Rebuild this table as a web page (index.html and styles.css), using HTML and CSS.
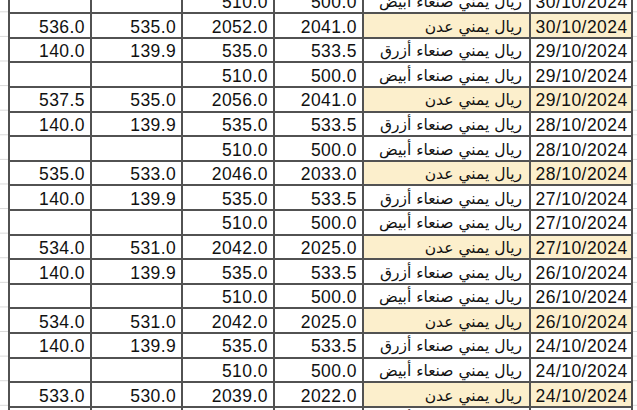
FILE: index.html
```html
<!DOCTYPE html>
<html lang="ar">
<head>
<meta charset="utf-8">
<title>أسعار الصرف</title>
<link rel="stylesheet" href="styles.css">
</head>
<body>
<table class="sheet">
<colgroup>
<col class="c1"><col class="c2"><col class="c3"><col class="c4"><col class="c5"><col class="c6">
</colgroup>
<tbody>
<tr><td></td><td></td><td>510.0</td><td>500.0</td><td class="cur">ريال يمني صنعاء أبيض</td><td class="date">30/10/2024</td></tr>
<tr class="aden"><td>536.0</td><td>535.0</td><td>2052.0</td><td>2041.0</td><td class="cur">ريال يمني عدن</td><td class="date">30/10/2024</td></tr>
<tr><td>140.0</td><td>139.9</td><td>535.0</td><td>533.5</td><td class="cur">ريال يمني صنعاء أزرق</td><td class="date">29/10/2024</td></tr>
<tr><td></td><td></td><td>510.0</td><td>500.0</td><td class="cur">ريال يمني صنعاء أبيض</td><td class="date">29/10/2024</td></tr>
<tr class="aden"><td>537.5</td><td>535.0</td><td>2056.0</td><td>2041.0</td><td class="cur">ريال يمني عدن</td><td class="date">29/10/2024</td></tr>
<tr><td>140.0</td><td>139.9</td><td>535.0</td><td>533.5</td><td class="cur">ريال يمني صنعاء أزرق</td><td class="date">28/10/2024</td></tr>
<tr><td></td><td></td><td>510.0</td><td>500.0</td><td class="cur">ريال يمني صنعاء أبيض</td><td class="date">28/10/2024</td></tr>
<tr class="aden"><td>535.0</td><td>533.0</td><td>2046.0</td><td>2033.0</td><td class="cur">ريال يمني عدن</td><td class="date">28/10/2024</td></tr>
<tr><td>140.0</td><td>139.9</td><td>535.0</td><td>533.5</td><td class="cur">ريال يمني صنعاء أزرق</td><td class="date">27/10/2024</td></tr>
<tr><td></td><td></td><td>510.0</td><td>500.0</td><td class="cur">ريال يمني صنعاء أبيض</td><td class="date">27/10/2024</td></tr>
<tr class="aden"><td>534.0</td><td>531.0</td><td>2042.0</td><td>2025.0</td><td class="cur">ريال يمني عدن</td><td class="date">27/10/2024</td></tr>
<tr><td>140.0</td><td>139.9</td><td>535.0</td><td>533.5</td><td class="cur">ريال يمني صنعاء أزرق</td><td class="date">26/10/2024</td></tr>
<tr><td></td><td></td><td>510.0</td><td>500.0</td><td class="cur">ريال يمني صنعاء أبيض</td><td class="date">26/10/2024</td></tr>
<tr class="aden"><td>534.0</td><td>531.0</td><td>2042.0</td><td>2025.0</td><td class="cur">ريال يمني عدن</td><td class="date">26/10/2024</td></tr>
<tr><td>140.0</td><td>139.9</td><td>535.0</td><td>533.5</td><td class="cur">ريال يمني صنعاء أزرق</td><td class="date">24/10/2024</td></tr>
<tr><td></td><td></td><td>510.0</td><td>500.0</td><td class="cur">ريال يمني صنعاء أبيض</td><td class="date">24/10/2024</td></tr>
<tr class="aden"><td>533.0</td><td>530.0</td><td>2039.0</td><td>2022.0</td><td class="cur">ريال يمني عدن</td><td class="date">24/10/2024</td></tr>
<tr><td>140.0</td><td>139.9</td><td>535.0</td><td>533.5</td><td class="cur">ريال يمني صنعاء أزرق</td><td class="date">23/10/2024</td></tr>
</tbody>
</table>
</body>
</html>
```

FILE: styles.css
```css
html, body {
  margin: 0;
  padding: 0;
  width: 637px;
  height: 410px;
  overflow: hidden;
  background-color: #ffffff;
}

body {
  background-image: repeating-linear-gradient(to bottom,
    transparent 0px, transparent 23.6px, #d9d9d9 23.6px, #d9d9d9 24.6px);
  background-position: 0 -12.3px;
  background-size: 100% 24.6px;
}

.sheet {
  margin: -12.3px 0 0 8px;
  width: 623px;
  border-collapse: collapse;
  table-layout: fixed;
  font-family: "Liberation Sans", Arial, sans-serif;
  font-size: 17.5px;
  letter-spacing: 0.45px;
  color: #111111;
  background: #ffffff;
}

.c1 { width: 82px; }
.c2 { width: 91.3px; }
.c3 { width: 91.7px; }
.c4 { width: 89px; }
.c5 { width: 167px; }
.c6 { width: 101.7px; }

.sheet td {
  height: 20.6px;
  padding: 2px 5px 0 0;
  border: 2px solid #525252;
  text-align: right;
  vertical-align: middle;
  line-height: 20px;
  white-space: nowrap;
  overflow: hidden;
}

.sheet td.cur {
  direction: rtl;
  text-align: right;
  padding: 2px 7px 0 0;
  font-family: "DejaVu Sans", sans-serif;
  font-size: 15.5px;
  letter-spacing: 0;
}

.sheet td.date {
  padding-right: 3px;
}

.aden td.cur,
.aden td.date {
  background: #fcefcc;
}
```
